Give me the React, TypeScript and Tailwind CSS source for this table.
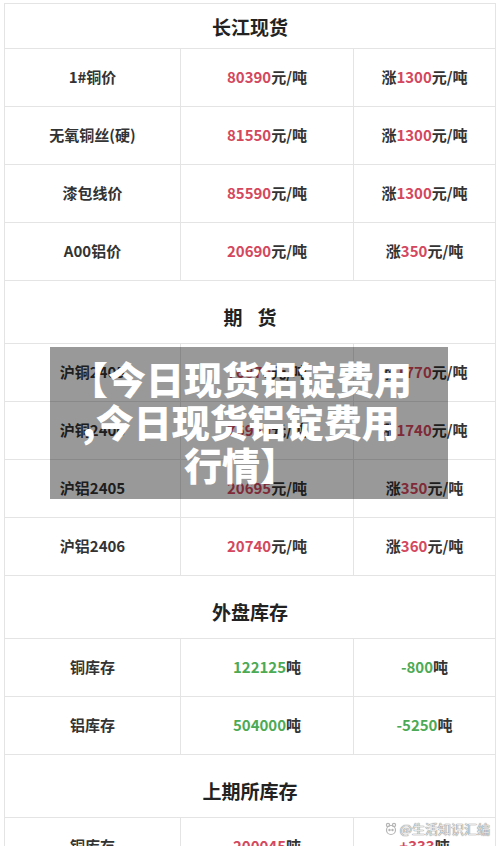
import React from "react";

type Row = { label: string; num: string; unit: string; pre?: string; chg: string; chgUnit: string; color: "red" | "green" };

const red = "text-[#d4475d]";
const green = "text-[#4caa55]";

function Header({ children, first }: { children: React.ReactNode; first?: boolean }) {
  return (
    <div
      className={`flex justify-center border-b border-[#e4e4e4] text-[19px] font-bold text-[#222] ${
        first ? "h-[45px] items-center pt-[3px]" : "h-[63px] items-center pt-[10px]"
      }`}
    >
      {children}
    </div>
  );
}

function DataRow({ r }: { r: Row }) {
  const c = r.color === "red" ? red : green;
  return (
    <div className="grid h-[58px] grid-cols-[176px_173px_141px] border-b border-[#e4e4e4] text-[15px] font-bold text-[#333]">
      <div className="flex items-center justify-center border-r border-[#e4e4e4]">{r.label}</div>
      <div className="flex items-center justify-center border-r border-[#e4e4e4]">
        <span className={c}>{r.num}</span>
        <span>{r.unit}</span>
      </div>
      <div className="flex items-center justify-center">
        {r.pre && <span>{r.pre}</span>}
        <span className={c}>{r.chg}</span>
        <span>{r.chgUnit}</span>
      </div>
    </div>
  );
}

const spot: Row[] = [
  { label: "1#铜价", num: "80390", unit: "元/吨", pre: "涨", chg: "1300", chgUnit: "元/吨", color: "red" },
  { label: "无氧铜丝(硬)", num: "81550", unit: "元/吨", pre: "涨", chg: "1300", chgUnit: "元/吨", color: "red" },
  { label: "漆包线价", num: "85590", unit: "元/吨", pre: "涨", chg: "1300", chgUnit: "元/吨", color: "red" },
  { label: "A00铝价", num: "20690", unit: "元/吨", pre: "涨", chg: "350", chgUnit: "元/吨", color: "red" },
];

const futures: Row[] = [
  { label: "沪铜2405", num: "76870", unit: "元/吨", pre: "涨", chg: "1770", chgUnit: "元/吨", color: "red" },
  { label: "沪铜2406", num: "76950", unit: "元/吨", pre: "涨", chg: "1740", chgUnit: "元/吨", color: "red" },
  { label: "沪铝2405", num: "20695", unit: "元/吨", pre: "涨", chg: "350", chgUnit: "元/吨", color: "red" },
  { label: "沪铝2406", num: "20740", unit: "元/吨", pre: "涨", chg: "360", chgUnit: "元/吨", color: "red" },
];

const lme: Row[] = [
  { label: "铜库存", num: "122125", unit: "吨", chg: "-800", chgUnit: "吨", color: "green" },
  { label: "铝库存", num: "504000", unit: "吨", chg: "-5250", chgUnit: "吨", color: "green" },
];

const shfe: Row[] = [
  { label: "铜库存", num: "200045", unit: "吨", chg: "+333", chgUnit: "吨", color: "red" },
];

export default function App() {
  return (
    <div
      className="relative h-[846px] w-[500px] overflow-hidden bg-white"
      style={{ fontFamily: '"Noto Sans CJK SC", "Noto Sans", sans-serif' }}
    >
      <div className="ml-[4px] mt-[3px] w-[492px] border-x border-t border-[#e4e4e4]">
        <Header first>长江现货</Header>
        {spot.map((r, i) => (
          <DataRow key={"s" + i} r={r} />
        ))}
        <Header>
          <span>期</span>
          <span className="ml-[15px]">货</span>
        </Header>
        {futures.map((r, i) => (
          <DataRow key={"f" + i} r={r} />
        ))}
        <Header>外盘库存</Header>
        {lme.map((r, i) => (
          <DataRow key={"l" + i} r={r} />
        ))}
        <Header>上期所库存</Header>
        {shfe.map((r, i) => (
          <DataRow key={"h" + i} r={r} />
        ))}
      </div>

      <div className="absolute left-[50px] top-[347px] h-[152px] w-[398px] bg-black/40 pt-[9px] pr-[16px] text-center text-[38px] font-black leading-[43px] text-white">
        <div>【今日现货铝锭费用</div>
        <div>,今日现货铝锭费用</div>
        <div>行情】</div>
      </div>

      <div className="absolute right-[10px] top-[819px] flex items-center gap-[2px] text-[13px] text-[#e6e6e6] [text-shadow:0_0_1px_#777,0_0_1px_#777]">
        <svg width="14" height="14" viewBox="0 0 14 14" fill="none" stroke="#b5b5b5" strokeWidth="1.2">
          <circle cx="7" cy="8" r="4.5" />
          <circle cx="4" cy="3" r="1.6" />
          <circle cx="10" cy="3" r="1.6" />
          <circle cx="5.5" cy="8" r="0.6" fill="#b5b5b5" />
          <circle cx="8.5" cy="8" r="0.6" fill="#b5b5b5" />
        </svg>
        <span>@生活知识汇编</span>
      </div>
    </div>
  );
}
